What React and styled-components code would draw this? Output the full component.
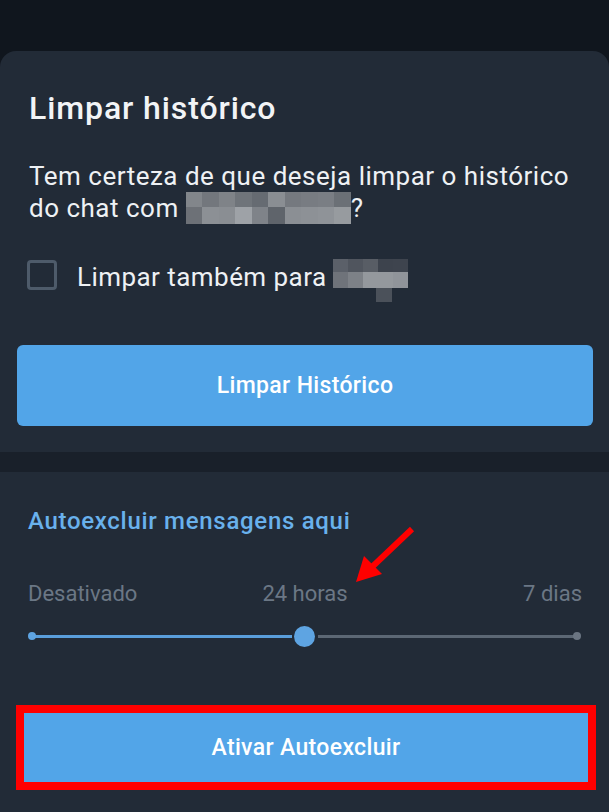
import React from "react";
import styled, { createGlobalStyle } from "styled-components";

const GlobalStyle = createGlobalStyle`
  html, body {
    margin: 0;
    padding: 0;
    background: #10161e;
  }
  * {
    box-sizing: border-box;
  }
  body {
    font-family: Roboto, "Noto Sans", Arial, sans-serif;
    -webkit-font-smoothing: antialiased;
  }
`;

const Screen = styled.div`
  width: 609px;
  height: 812px;
  overflow: hidden;
  display: flex;
  flex-direction: column;
  background: #10161e;
`;

const Backdrop = styled.div`
  height: 51px;
  flex: none;
`;

const Sheet = styled.div`
  flex: 1;
  display: flex;
  flex-direction: column;
  background: #222b37;
  border-radius: 16px 16px 0 0;
`;

const Section = styled.section`
  position: relative;
  padding: ${(p) => p.$pad};
  display: flex;
  flex-direction: column;
`;

const Title = styled.h2`
  margin: 0 0 0 29px;
  font-size: 32px;
  line-height: 36px;
  font-weight: 500;
  letter-spacing: 0.9px;
  color: #f2f4f6;
`;

const Message = styled.p`
  margin: 34px 0 0 29px;
  font-size: 26px;
  line-height: 32px;
  letter-spacing: 0.5px;
  color: #eef1f4;
`;

const CheckRow = styled.label`
  display: flex;
  align-items: flex-start;
  margin: 35px 0 0 27px;
  height: 43px;
`;

const CheckBox = styled.span`
  width: 30px;
  height: 30px;
  margin-top: 1px;
  border: 3px solid #4e5b6a;
  border-radius: 4px;
  flex: none;
`;

const CheckLabel = styled.span`
  margin: 2px 0 0 20px;
  font-size: 26px;
  line-height: 32px;
  letter-spacing: 0.45px;
  color: #eef1f4;
`;

const Mosaic = styled.span`
  display: inline-block;
  overflow: hidden;
  vertical-align: ${(p) => p.$valign || "baseline"};
  margin: ${(p) => p.$margin || "0"};
`;

const MosaicRow = styled.span`
  display: flex;
  height: ${(p) => p.$h}px;
  padding-left: ${(p) => p.$offset || 0}px;
`;

const Cell = styled.span`
  display: block;
  width: ${(p) => p.$w}px;
  height: 100%;
  background: ${(p) => p.$c};
`;

const PrimaryButton = styled.button`
  display: flex;
  align-items: center;
  justify-content: center;
  width: ${(p) => p.$w || "auto"};
  height: ${(p) => p.$h}px;
  margin: ${(p) => p.$margin || "0"};
  border: none;
  border-radius: ${(p) => p.$radius ?? 6}px;
  background: #52a5e8;
  color: #ffffff;
  font-family: Roboto, "Noto Sans", Arial, sans-serif;
  font-size: 23px;
  font-weight: 500;
  letter-spacing: 0.35px;
  cursor: pointer;
`;

const Divider = styled.div`
  height: 20px;
  flex: none;
  background: #19202a;
`;

const SectionHeader = styled.h3`
  margin: 0 0 0 28px;
  font-size: 24px;
  line-height: 28px;
  font-weight: 500;
  letter-spacing: 0.7px;
  color: #69b1ec;
`;

const StopLabels = styled.div`
  display: grid;
  grid-template-columns: 1fr auto 1fr;
  margin: 46px 27px 0 28px;
  font-size: 22px;
  line-height: 26px;
  color: #6b7785;

  span:first-child {
    justify-self: start;
  }
  span:last-child {
    justify-self: end;
  }
`;

const Slider = styled.div`
  position: relative;
  height: 20px;
  margin: 19px 28px 0 28px;
`;

const Rail = styled.div`
  position: absolute;
  top: 8.5px;
  left: ${(p) => p.$from};
  right: ${(p) => p.$to};
  height: 3px;
  background: ${(p) => p.$c};
`;

const Dot = styled.span`
  position: absolute;
  top: 6px;
  left: ${(p) => p.$x};
  width: 8px;
  height: 8px;
  margin-left: -4px;
  border-radius: 50%;
  background: ${(p) => p.$c};
`;

const Thumb = styled.span`
  position: absolute;
  top: 0;
  left: 50%;
  width: 21px;
  height: 21px;
  margin-left: -10.5px;
  border-radius: 50%;
  background: #5ea4e2;
`;

const Highlight = styled.div`
  margin: 59px 13px 0 16px;
  border: 8px solid #ff0000;
`;

const Arrow = styled.svg`
  position: absolute;
  left: 0;
  top: 0;
  pointer-events: none;
`;

const nameTop = ["#82868b", "#73777d", "#7f8388", "#6f747a", "#666b72", "#8a8e93", "#75797f", "#787c82", "#7a7e84", "#6b7076"];
const nameBottom = ["#6d7177", "#8c9095", "#8a8e93", "#9ea2a7", "#7f8389", "#5f646b", "#8b8f94", "#8d9196", "#8f9398", "#979b9f"];
const shortTop = ["#5b6069", "#50555e", "#585d65", "#3d434d", "#3e444e"];
const shortBottom = ["#6f737a", "#7d8187", "#94989d", "#94989d", "#90949a"];

const ClearHistorySheet = () => {
  return (
    <Screen>
      <GlobalStyle />
      <Backdrop />
      <Sheet>
        <Section $pad="39px 0 26px 0">
          <Title>Limpar histórico</Title>
          <Message>
            Tem certeza de que deseja limpar o histórico
            <br />
            do chat com{" "}
            <Mosaic $valign="-7px">
              <MosaicRow $h={15}>
                {nameTop.map((c, i) => (
                  <Cell key={i} $w={16.5} $c={c} />
                ))}
              </MosaicRow>
              <MosaicRow $h={17}>
                {nameBottom.map((c, i) => (
                  <Cell key={i} $w={16.5} $c={c} />
                ))}
              </MosaicRow>
            </Mosaic>
            ?
          </Message>

          <CheckRow>
            <CheckBox />
            <CheckLabel>Limpar também para</CheckLabel>
            <Mosaic $margin="0 0 0 6px">
              <MosaicRow $h={13}>
                {shortTop.map((c, i) => (
                  <Cell key={i} $w={15} $c={c} />
                ))}
              </MosaicRow>
              <MosaicRow $h={16}>
                {shortBottom.map((c, i) => (
                  <Cell key={i} $w={15} $c={c} />
                ))}
              </MosaicRow>
              <MosaicRow $h={14} $offset={43}>
                <Cell $w={16} $c="#4b515a" />
              </MosaicRow>
            </Mosaic>
          </CheckRow>

          <PrimaryButton $h={81} $margin="43px 16px 0 17px">
            Limpar Histórico
          </PrimaryButton>
        </Section>

        <Divider />

        <Section $pad="35px 0 0 0">
          <SectionHeader>Autoexcluir mensagens aqui</SectionHeader>

          <StopLabels>
            <span>Desativado</span>
            <span>24 horas</span>
            <span>7 dias</span>
          </StopLabels>

          <Slider>
            <Rail $from="7px" $to="calc(50% + 13px)" $c="#5a9edb" />
            <Rail $from="calc(50% + 13px)" $to="7px" $c="#5c6774" />
            <Dot $x="4px" $c="#5ea4e2" />
            <Dot $x="calc(100% - 4px)" $c="#6b7582" />
            <Thumb />
          </Slider>

          <Highlight>
            <PrimaryButton $w="100%" $h={69} $radius={0}>
              Ativar Autoexcluir
            </PrimaryButton>
          </Highlight>

          <Arrow width="609" height="200" viewBox="0 0 609 200">
            <line x1="412" y1="57" x2="372" y2="95" stroke="#ff0000" strokeWidth="6" />
            <polygon points="356,110 382,102 364,84" fill="#ff0000" />
          </Arrow>
        </Section>
      </Sheet>
    </Screen>
  );
};

export default function App() {
  return <ClearHistorySheet />;
}
